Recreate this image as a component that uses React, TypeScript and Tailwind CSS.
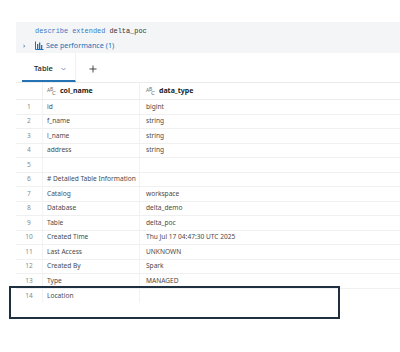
import React from 'react';

const rows: [string, string, string][] = [
  ['1', 'id', 'bigint'],
  ['2', 'f_name', 'string'],
  ['3', 'l_name', 'string'],
  ['4', 'address', 'string'],
  ['5', '', ''],
  ['6', '# Detailed Table Information', ''],
  ['7', 'Catalog', 'workspace'],
  ['8', 'Database', 'delta_demo'],
  ['9', 'Table', 'delta_poc'],
  ['10', 'Created Time', 'Thu Jul 17 04:47:30 UTC 2025'],
  ['11', 'Last Access', 'UNKNOWN'],
  ['12', 'Created By', 'Spark'],
  ['13', 'Type', 'MANAGED'],
  ['14', 'Location', ''],
];

const AbcIcon: React.FC = () => (
  <span className="relative inline-block w-[10px] h-[9px] text-[#6b6b6b] leading-none mr-[3px] font-normal">
    <span className="absolute left-0 top-[1px] text-[5px]">A</span>
    <span className="absolute left-[3px] top-0 text-[5px]">B</span>
    <span className="absolute left-[5px] top-[3px] text-[6px]">C</span>
  </span>
);

const App: React.FC = () => {
  return (
    <div className="w-[400px] h-[352px] bg-white relative overflow-hidden pt-[22px]" style={{ fontFamily: '"Noto Sans", "Open Sans", sans-serif' }}>
      {/* Code cell */}
      <div className="ml-[16px] h-[31px] bg-[#f4f5f7] flex flex-col">
        <div className="h-[17px] pl-[19px] pt-[5px] text-[6.9px] leading-[9px]" style={{ fontFamily: '"Liberation Mono", monospace' }}>
          <span className="text-[#3a78c4]">describe extended</span> <span className="text-[#333]">delta_poc</span>
        </div>
        <div className="flex items-center h-[12px] pt-[1px]">
          <span className="w-[19px] pl-[7px] text-[#555] text-[7px] leading-none">›</span>
          <svg width="9" height="9" viewBox="0 0 9 9" className="mr-[2px]">
            <path d="M0.5 0.5V8.5H8.5" fill="none" stroke="#2272b4" strokeWidth="1" />
            <rect x="2" y="3" width="1.3" height="5" fill="#2272b4" />
            <rect x="4" y="1.5" width="1.3" height="6.5" fill="#2272b4" />
            <rect x="6" y="4" width="1.3" height="4" fill="#2272b4" />
          </svg>
          <span className="text-[#2272b4] text-[7.2px] leading-none">See performance (1)</span>
        </div>
      </div>

      {/* Tabs */}
      <div className="ml-[16px] h-[30px] flex border-b border-[#ececec]">
        <div className="ml-[6px] w-[54px] flex items-center gap-[8px] pl-[12px] border-b-2 border-[#2272b4] border-r border-r-[#f0f0f0] pt-[4px]">
          <span className="text-[7.5px] text-[#222] font-medium">Table</span>
          <svg width="5" height="4" viewBox="0 0 5 4">
            <path d="M0.5 1L2.5 3L4.5 1" fill="none" stroke="#5a7fa8" strokeWidth="0.8" />
          </svg>
        </div>
        <div className="flex items-center pl-[13px] pt-[2px]">
          <svg width="8" height="8" viewBox="0 0 8 8">
            <path d="M4 0.5V7.5M0.5 4H7.5" stroke="#333" strokeWidth="0.9" />
          </svg>
        </div>
      </div>

      {/* Table */}
      <div className="ml-[16px] text-[6.6px] text-[#4a4a4a]">
        <div className="flex h-[17px] border-b border-[#ececec] font-bold text-[#222]">
          <div className="w-[27px] border-r border-[#f0f0f0]" />
          <div className="w-[97px] flex items-center pl-[4px] border-r border-[#f0f0f0]">
            <AbcIcon />
            <span className="text-[7px]">col_name</span>
          </div>
          <div className="flex-1 flex items-center pl-[6px]">
            <AbcIcon />
            <span className="text-[7px]">data_type</span>
          </div>
        </div>
        {rows.map(([n, a, b], i) => (
          <div key={n} className={`flex h-[14.5px] ${i < rows.length - 1 ? 'border-b border-[#f0f0f0]' : ''}`}>
            <div className="w-[27px] flex items-center justify-center text-[#8a8a8a] border-r border-[#f3f3f3]">{n}</div>
            <div className="w-[97px] flex items-center pl-[4px] border-r border-[#f3f3f3] whitespace-nowrap">{a}</div>
            <div className="flex-1 flex items-center pl-[6px] whitespace-nowrap">{b}</div>
          </div>
        ))}
      </div>

      {/* Highlight box */}
      <div className="absolute left-[9px] top-[286px] w-[331px] h-[33px] border-2 border-[#1e2f3f]" />
    </div>
  );
};

export default App;
